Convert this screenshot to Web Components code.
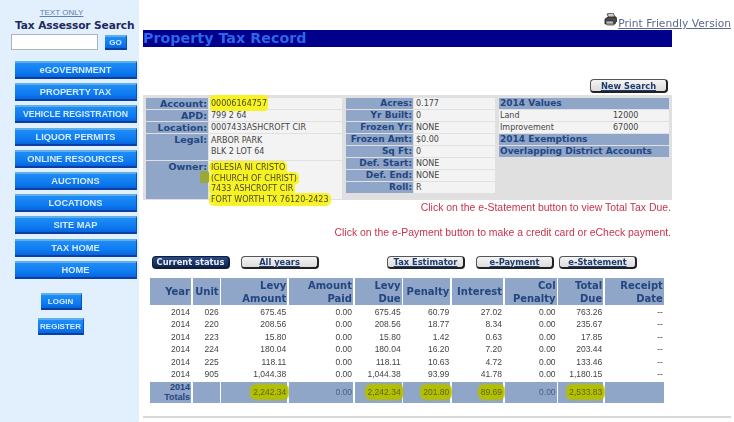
<!DOCTYPE html>
<html>
<head>
<meta charset="utf-8">
<title>Property Tax Record</title>
<style>
  html, body { margin: 0; padding: 0; background: #fff; }
  body { width: 734px; height: 422px; overflow: hidden; font-family: "Liberation Sans", Arial, sans-serif; }
</style>
</head>
<body>
<tax-page>
  <tax-sidebar slot="side"></tax-sidebar>
  <tax-main slot="main"></tax-main>
</tax-page>

<script>
  const VERDANA = '"DejaVu Sans", Verdana, sans-serif';
  const ARIAL = '"Liberation Sans", Arial, sans-serif';

  class TaxPage extends HTMLElement {
    constructor() {
      super();
      this.attachShadow({ mode: 'open' });
      this.shadowRoot.innerHTML = `
        <style>
          :host { display: flex; width: 734px; height: 422px; filter: blur(0.4px); }
          .side { display: block; flex: 0 0 139px; background: #e2f0fd; }
          .main { display: block; flex: 1; }
        </style>
        <div class="side"><slot name="side"></slot></div>
        <div class="main"><slot name="main"></slot></div>
      `;
    }
  }

  class NavButton extends HTMLElement {
    constructor() {
      super();
      this.attachShadow({ mode: 'open' });
      this.shadowRoot.innerHTML = `
        <style>
          :host {
            display: flex;
            align-items: center;
            justify-content: center;
            box-sizing: border-box;
            height: 18px;
            font: bold 9.3px ${ARIAL};
            color: #d5eaff;
            background: linear-gradient(#1f8df6, #0b78f0 70%, #0a64d8);
            border-top: 2px solid #5eaeea;
            border-bottom: 2px solid #0a3fa8;
            border-right: 1px solid #0a4fb8;
            white-space: nowrap;
          }
          :host([small]) { font-size: 8px; height: 17px; }
          :host([tight]) { font-size: 8.7px; }
        </style>
        <slot></slot>
      `;
    }
  }

  class TaxSidebar extends HTMLElement {
    constructor() {
      super();
      this.attachShadow({ mode: 'open' });
      const items = ['eGOVERNMENT', 'PROPERTY TAX', 'VEHICLE REGISTRATION', 'LIQUOR PERMITS', 'ONLINE RESOURCES', 'AUCTIONS', 'LOCATIONS', 'SITE MAP', 'TAX HOME', 'HOME'];
      this.shadowRoot.innerHTML = `
        <style>
          :host { display: block; padding-top: 8px; }
          .text-only { display: block; text-align: center; font: 8px ${ARIAL}; color: #5d7db5; text-decoration: underline; height: 10px; line-height: 9px; padding-right: 16px; }
          h2 { margin: 0; font: bold 10.6px/14px ${VERDANA}; color: #1c2a5e; padding-left: 15px; white-space: nowrap; letter-spacing: -0.1px; }
          .search { display: flex; gap: 7px; margin: 2px 0 11px 11px; height: 16px; }
          .box { width: 87px; box-sizing: border-box; border: 1px solid #a9b4bf; background: #fff; margin: 0; padding: 0; }
          .go { flex: 0 0 22px; font-size: 8px; height: 15px; margin-top: 1px; }
          .nav { display: grid; gap: 4.2px; margin: 0 2px 0 15px; }
          .auth { display: grid; justify-items: center; gap: 8px; margin: 14px 0 0 0; padding-right: 17px; }
          .login { width: 41px; }
          .register { width: 46px; }
        </style>
        <a class="text-only">TEXT ONLY</a>
        <h2>Tax Assessor Search</h2>
        <div class="search">
          <input class="box" type="text">
          <nav-button class="go" small>GO</nav-button>
        </div>
        <div class="nav">
          ${items.map(i => `<nav-button${i.length > 16 ? ' tight' : ''}>${i}</nav-button>`).join('')}
        </div>
        <div class="auth">
          <nav-button class="login" small>LOGIN</nav-button>
          <nav-button class="register" small>REGISTER</nav-button>
        </div>
      `;
    }
  }

  class PillButton extends HTMLElement {
    constructor() {
      super();
      this.attachShadow({ mode: 'open' });
      this.shadowRoot.innerHTML = `
        <style>
          :host {
            display: flex;
            align-items: center;
            justify-content: center;
            box-sizing: border-box;
            width: 78px;
            height: 13px;
            font: bold 8.3px ${VERDANA};
            color: #1d3d70;
            background: linear-gradient(#f4f4f4, #dcdcdc);
            border: 1px solid #555;
            border-right: 2px solid #222;
            border-bottom: 2px solid #222;
            border-radius: 4px;
            white-space: nowrap;
          }
          :host([active]) {
            background: linear-gradient(#2a4a86, #10264f);
            color: #e8eef8;
            border-color: #0c1d3e;
          }
          span { text-decoration: underline; }
          :host([active]) span { text-decoration: none; }
        </style>
        <span><slot></slot></span>
      `;
    }
  }

  class InfoPanel extends HTMLElement {
    constructor() {
      super();
      this.attachShadow({ mode: 'open' });
      const mid = [['Acres:', '0.177'], ['Yr Built:', '0'], ['Frozen Yr:', 'NONE'], ['Frozen Amt:', '$0.00'], ['Sq Ft:', '0'], ['Def. Start:', 'NONE'], ['Def. End:', 'NONE'], ['Roll:', 'R']];
      this.shadowRoot.innerHTML = `
        <style>
          :host { display: flex; align-items: flex-start; box-sizing: border-box; width: 529px; height: 105px; padding: 3px 0 0 3px; gap: 4px; background: #e0e0e0; font: 8px/10.5px ${VERDANA}; color: #444; position: relative; }
          .kv { display: grid; gap: 1px; }
          .left { grid-template-columns: 62px 133px; grid-template-rows: 11px 11px 11px 26px 38px; }
          .middle { grid-template-columns: 67px 81px; grid-auto-rows: 11px; }
          .l { background: #8fa6c9; color: #24457e; font-weight: bold; font-size: 9px; text-align: right; padding-right: 1px; white-space: nowrap; line-height: 11px; }
          .v { background: #f3f3f3; padding-left: 2px; white-space: nowrap; line-height: 11px; }
          .left .l { font-size: 9.5px; }
          .hl { background: #f6f224; box-shadow: 0 0 1px 2px #f6f224; border-radius: 3px; color: #4a4a20; position: relative; }
          .tall { box-shadow: 0 -3px 0 1px #f6f224, 0 2px 0 1px #f6f224; }
          .stack { line-height: 10.6px; padding-top: 2px; }
          .blob { position: absolute; left: 57px; top: 76px; width: 9px; height: 12px; background: #9aa83a; border-radius: 2px; }
          .right { width: 170px; display: grid; grid-template-columns: 113px 57px; grid-auto-rows: 11px; gap: 1px 0; }
          .h { grid-column: 1 / 3; background: #8fa6c9; color: #24457e; font-weight: bold; font-size: 9px; line-height: 11px; padding-left: 1px; white-space: nowrap; }
          .c { background: #f3f3f3; padding-left: 1px; line-height: 11px; }
        </style>
        <div class="kv left">
          <div class="l">Account:</div><div class="v"><span class="hl tall">00006164757</span></div>
          <div class="l">APD:</div><div class="v">799 2 64</div>
          <div class="l">Location:</div><div class="v">0007433ASHCROFT CIR</div>
          <div class="l">Legal:</div><div class="v stack">ARBOR PARK<br>BLK 2 LOT 64</div>
          <div class="l">Owner:</div>
          <div class="v stack"><span class="hl">IGLESIA NI CRISTO</span><br><span class="hl">(CHURCH OF CHRIST)</span><br><span class="hl">7433 ASHCROFT CIR</span><br><span class="hl">FORT WORTH TX 76120-2423</span></div>
        </div>
        <div class="blob"></div>
        <div class="kv middle">
          ${mid.map(r => `<div class="l">${r[0]}</div><div class="v">${r[1]}</div>`).join('')}
        </div>
        <div class="right">
          <div class="h">2014 Values</div>
          <div class="c">Land</div><div class="c">12000</div>
          <div class="c">Improvement</div><div class="c">67000</div>
          <div class="h">2014 Exemptions</div>
          <div class="h">Overlapping District Accounts</div>
        </div>
      `;
    }
  }

  class LevyTable extends HTMLElement {
    constructor() {
      super();
      this.attachShadow({ mode: 'open' });
      const rows = [
        ['2014', '026', '675.45', '0.00', '675.45', '60.79', '27.02', '0.00', '763.26', '--'],
        ['2014', '220', '208.56', '0.00', '208.56', '18.77', '8.34', '0.00', '235.67', '--'],
        ['2014', '223', '15.80', '0.00', '15.80', '1.42', '0.63', '0.00', '17.85', '--'],
        ['2014', '224', '180.04', '0.00', '180.04', '16.20', '7.20', '0.00', '203.44', '--'],
        ['2014', '225', '118.11', '0.00', '118.11', '10.63', '4.72', '0.00', '133.46', '--'],
        ['2014', '905', '1,044.38', '0.00', '1,044.38', '93.99', '41.78', '0.00', '1,180.15', '--']
      ];
      const heads = ['Year', 'Unit', 'Levy<br>Amount', 'Amount<br>Paid', 'Levy<br>Due', 'Penalty', 'Interest', 'Col<br>Penalty', 'Total<br>Due', 'Receipt<br>Date'];
      const totals = ['2014<br>Totals', '', '<b>2,242.34</b>', '0.00', '<b>2,242.34</b>', '<b>201.80</b>', '<b>89.69</b>', '0.00', '<b>2,533.83</b>', ''];
      this.shadowRoot.innerHTML = `
        <style>
          :host { display: grid; grid-template-columns: 41px 27px 66px 64px 47px 47px 51px 52px 45px 59px; column-gap: 1.67px; width: 514px; font: 8.5px/12.6px ${ARIAL}; color: #444; }
          .th { display: flex; align-items: center; justify-content: flex-end; height: 27px; margin-bottom: 0.5px; background: #8fa6c9; color: #24457e; font: bold 10px/13px ${VERDANA}; text-align: right; padding-right: 1px; white-space: nowrap; }
          .td { text-align: right; padding-right: 1px; height: 12.6px; white-space: nowrap; }
          .tot { display: flex; align-items: center; justify-content: flex-end; height: 21px; margin-top: 0.5px; background: #8fa6c9; color: #4a5f85; padding-right: 1px; text-align: right; line-height: 10px; position: relative; }
          .tot.first { color: #24457e; font: bold 9px/10px ${ARIAL}; }
          b { font-weight: normal; color: #5a6620; background: #b4bf00; border-radius: 3px; box-shadow: 0 0 2px 3px #b4bf00; }
        </style>
        ${heads.map(h => `<div class="th">${h}</div>`).join('')}
        ${rows.map(r => r.map(c => `<div class="td">${c}</div>`).join('')).join('')}
        ${totals.map((t, i) => `<div class="tot${i === 0 ? ' first' : ''}">${t}</div>`).join('')}
      `;
    }
  }

  class TaxMain extends HTMLElement {
    constructor() {
      super();
      this.attachShadow({ mode: 'open' });
      this.shadowRoot.innerHTML = `
        <style>
          :host { display: block; padding: 0 0 0 4px; position: relative; }
          .print { display: flex; justify-content: flex-end; align-items: flex-end; height: 30px; gap: 1px; padding-right: 3px; box-sizing: border-box; }
          .print a { font: 10.7px/13px ${VERDANA}; color: #5c6a8c; text-decoration: underline; }
          .print svg { margin-bottom: 4px; }
          h1 { margin: 0; width: 529px; height: 17px; background: #00008b; color: #2a66ee; font: bold 14.3px/17px ${VERDANA}; white-space: nowrap; overflow: hidden; }
          .search-row { display: flex; justify-content: flex-end; width: 525px; height: 48px; padding-top: 32px; box-sizing: border-box; }
          .search-row pill-button { height: 14px; }
          .msg { width: 528px; text-align: right; font: 10.45px/12px ${ARIAL}; color: #c8344c; white-space: nowrap; }
          .m1 { margin-top: 2px; height: 25px; padding-top: 0; }
          .m2 { height: 12px; }
          .buttons { display: flex; margin: 17px 0 0 9px; height: 13px; }
          .gap1 { width: 11px; } .gap2 { width: 68px; } .gap3 { width: 11px; } .gap4 { width: 5px; }
          levy-table { margin: 9px 0 0 7px; }
          .rule { height: 2px; background: #d8d8d8; margin-top: 13px; margin-right: 3px; }
        </style>
        <div class="print">
          <svg width="13" height="13" viewBox="0 0 13 13">
            <path d="M3 1l6 -1 2 4 -6 1z" fill="#d0d0d0" stroke="#333" stroke-width=".8"/>
            <path d="M1 6l3 -2 8 0 1 4 -3 3 -9 0z" fill="#4a4a4a" stroke="#222" stroke-width=".8"/>
            <path d="M2 8h7l1 3H2z" fill="#bbb" stroke="#222" stroke-width=".6"/>
            <path d="M3 12h7l2-2" fill="none" stroke="#777" stroke-width="1"/>
          </svg>
          <a>Print Friendly Version</a>
        </div>
        <h1>Property Tax Record</h1>
        <div class="search-row"><pill-button>New Search</pill-button></div>
        <info-panel></info-panel>
        <div class="msg m1">Click on the e-Statement button to view Total Tax Due.</div>
        <div class="msg m2">Click on the e-Payment button to make a credit card or eCheck payment.</div>
        <div class="buttons">
          <pill-button active>Current status</pill-button><i class="gap1"></i>
          <pill-button>All years</pill-button><i class="gap2"></i>
          <pill-button>Tax Estimator</pill-button><i class="gap3"></i>
          <pill-button>e-Payment</pill-button><i class="gap4"></i>
          <pill-button>e-Statement</pill-button>
        </div>
        <levy-table></levy-table>
        <div class="rule"></div>
      `;
    }
  }

  customElements.define('tax-page', TaxPage);
  customElements.define('nav-button', NavButton);
  customElements.define('tax-sidebar', TaxSidebar);
  customElements.define('pill-button', PillButton);
  customElements.define('info-panel', InfoPanel);
  customElements.define('levy-table', LevyTable);
  customElements.define('tax-main', TaxMain);
</script>
</body>
</html>
